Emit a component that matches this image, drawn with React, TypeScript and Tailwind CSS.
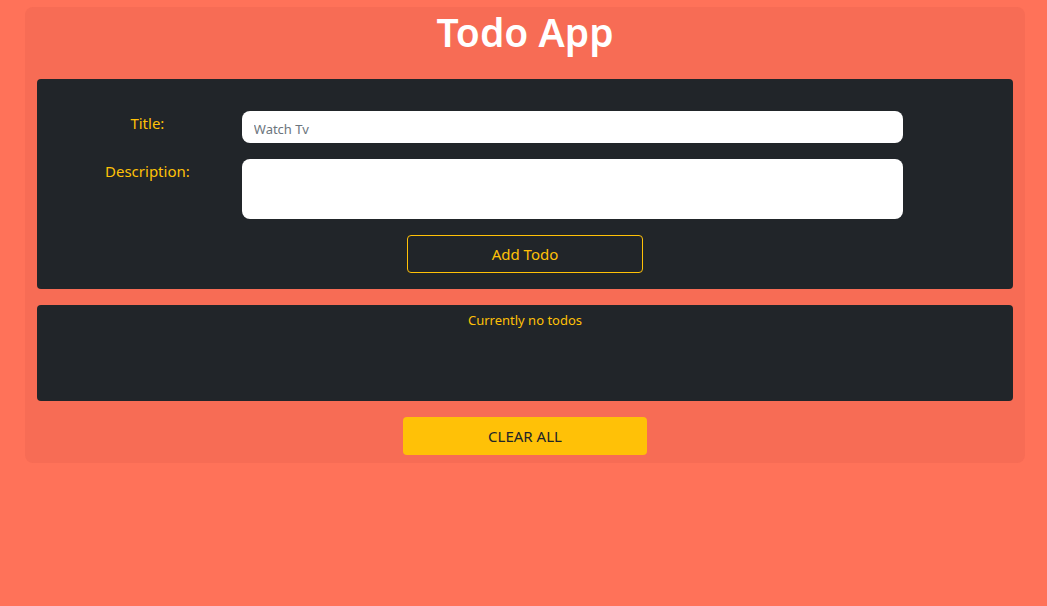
export default function App() {
  return (
    <div className="min-h-[606px] w-full bg-[#ff7259] pt-[7px]" style={{ fontFamily: '"Noto Sans", "Open Sans", sans-serif' }}>
      <div className="ml-[25px] w-[1000px] rounded-lg bg-[#f76c55] px-3 pb-2">
        <h1 className="flex h-[72px] items-start justify-center text-[39px] font-semibold leading-[50px] text-white">Todo App</h1>
        <div className="rounded bg-[#212529] px-4 pt-8 pb-4">
          <div className="grid grid-cols-10 items-start">
            <label className="col-span-2 pt-[2px] text-center text-[15px] leading-[20px] text-[#ffc107]">Title:</label>
            <input
              className="col-span-7 h-8 rounded-lg bg-white px-3 pt-[3px] text-[13px] text-[#495057] outline-none placeholder:text-[#6c757d]"
              placeholder="Watch Tv"
            />
          </div>
          <div className="mt-4 grid grid-cols-10 items-start">
            <label className="col-span-2 pt-[2px] text-center text-[15px] leading-[20px] text-[#ffc107]">Description:</label>
            <textarea className="col-span-7 h-[60px] resize-none rounded-lg bg-white px-3 outline-none" />
          </div>
          <div className="mt-4 flex justify-center">
            <button className="h-[38px] w-[236px] rounded border border-[#ffc107] text-[15px] text-[#ffc107]">Add Todo</button>
          </div>
        </div>
        <div className="mt-4 h-24 rounded bg-[#212529] pt-[6px] text-center text-[13px] leading-[18px] text-[#ffc107]">Currently no todos</div>
        <div className="mt-4 flex justify-center">
          <button className="h-[38px] w-[244px] rounded bg-[#ffc107] text-[15px] text-[#212529]">CLEAR ALL</button>
        </div>
      </div>
    </div>
  );
}
